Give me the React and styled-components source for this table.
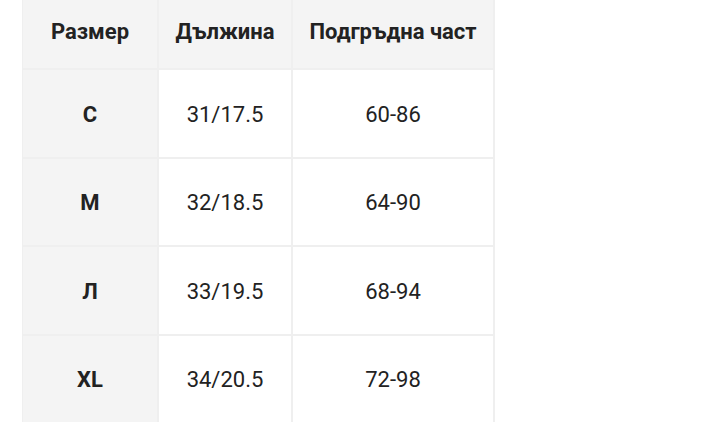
import React from "react";
import styled, { createGlobalStyle } from "styled-components";

const GlobalStyle = createGlobalStyle`
    html, body { margin: 0; padding: 0; background: #fff; }
    body { font-family: Roboto, "Liberation Sans", sans-serif; }
`;

const rows = [
    { size: "С", length: "31/17.5", chest: "60-86" },
    { size: "М", length: "32/18.5", chest: "64-90" },
    { size: "Л", length: "33/19.5", chest: "68-94" },
    { size: "XL", length: "34/20.5", chest: "72-98" },
];

const App = () => (
    <Page>
        <GlobalStyle />
        <Grid>
            <Cell $head>Размер</Cell>
            <Cell $head>Дължина</Cell>
            <Cell $head>Подгръдна част</Cell>
            {rows.map((r) => (
                <React.Fragment key={r.size}>
                    <Cell $label>{r.size}</Cell>
                    <Cell>{r.length}</Cell>
                    <Cell>{r.chest}</Cell>
                </React.Fragment>
            ))}
        </Grid>
    </Page>
);

const Page = styled.div`
    width: 720px; height: 422px; overflow: hidden;
    padding-left: 22px; box-sizing: border-box;
`;

const Grid = styled.div`
    display: grid;
    grid-template-columns: 136px 134px 202px;
    grid-template-rows: 70px repeat(4, 88.5px);
    border-left: 1px solid #efefef;
`;

const Cell = styled.div`
    display: flex; align-items: center; justify-content: center;
    box-sizing: border-box;
    border-right: 2px solid #efefef;
    border-bottom: 2px solid #efefef;
    background: ${(p) => (p.$head || p.$label ? "#f4f4f4" : "#fff")};
    color: #222;
    font-size: 22px;
    font-weight: ${(p) => (p.$head || p.$label ? 700 : 400)};
    padding-top: ${(p) => (p.$head ? "0" : "2px")};
    padding-bottom: ${(p) => (p.$head ? "6px" : "0")};
`;

export default App;
